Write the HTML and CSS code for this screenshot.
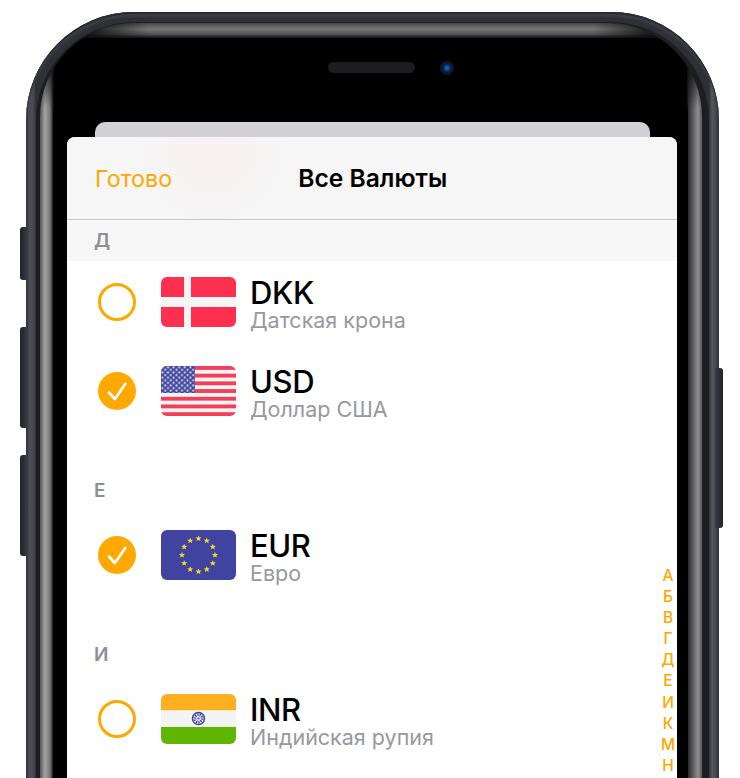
FILE: index.html
```html
<!DOCTYPE html>
<html lang="ru">
<head>
    <meta charset="UTF-8">
    <meta name="viewport" content="width=device-width, initial-scale=1.0">
    <title>Все Валюты</title>
    <link rel="stylesheet" href="styles.css">
</head>
<body>

    <div class="device">
        <div class="side-btn btn-mute"></div>
        <div class="side-btn btn-up"></div>
        <div class="side-btn btn-down"></div>
        <div class="side-btn btn-power"></div>

        <div class="band">
            <div class="bezel">
                <div class="screen">
                    <div class="notch">
                        <div class="speaker"></div>
                        <div class="camera"></div>
                    </div>

                    <div class="sheet-back"></div>
                    <div class="sheet">
                        <div class="navbar">
                            <a class="done" href="#">Готово</a>
                            <h1>Все Валюты</h1>
                        </div>

                        <div class="section-title first">Д</div>
                        <div class="rows">
                            <div class="row">
                                <span class="radio"></span>
                                <svg class="flag" viewBox="0 0 75 50">
                                    <rect width="75" height="50" fill="#ff304f"/>
                                    <rect x="23" width="7" height="50" fill="#f5f5f5"/>
                                    <rect y="20" width="75" height="10" fill="#f5f5f5"/>
                                </svg>
                                <div class="currency">
                                    <div class="code">DKK</div>
                                    <div class="name">Датская крона</div>
                                </div>
                            </div>
                            <div class="row">
                                <span class="radio checked">
                                    <svg viewBox="0 0 38 38"><path d="M11 20.5L16.8 27 27.3 12" fill="none" stroke="#fff" stroke-width="2.7" stroke-linecap="round" stroke-linejoin="round"/></svg>
                                </span>
                                <svg class="flag" viewBox="0 0 75 50">
                                    <defs>
                                        <pattern id="usStars" width="5.6" height="5.2" patternUnits="userSpaceOnUse">
                                            <circle cx="1.4" cy="1.3" r="1" fill="#eeeef8"/>
                                            <circle cx="4.2" cy="3.9" r="1" fill="#eeeef8"/>
                                        </pattern>
                                    </defs>
                                    <rect width="75" height="50" fill="#f5f5f5"/>
                                    <rect y="0" width="75" height="3.85" fill="#f33f57"/>
                                    <rect y="7.7" width="75" height="3.85" fill="#f33f57"/>
                                    <rect y="15.4" width="75" height="3.85" fill="#f33f57"/>
                                    <rect y="23.1" width="75" height="3.85" fill="#f33f57"/>
                                    <rect y="30.8" width="75" height="3.85" fill="#f33f57"/>
                                    <rect y="38.5" width="75" height="3.85" fill="#f33f57"/>
                                    <rect y="46.2" width="75" height="3.8" fill="#f33f57"/>
                                    <rect width="34" height="27" fill="#434aa0"/>
                                    <rect width="34" height="27" fill="url(#usStars)"/>
                                </svg>
                                <div class="currency">
                                    <div class="code">USD</div>
                                    <div class="name">Доллар США</div>
                                </div>
                            </div>
                        </div>

                        <div class="section-title">Е</div>
                        <div class="rows">
                            <div class="row">
                                <span class="radio checked">
                                    <svg viewBox="0 0 38 38"><path d="M11 20.5L16.8 27 27.3 12" fill="none" stroke="#fff" stroke-width="2.7" stroke-linecap="round" stroke-linejoin="round"/></svg>
                                </span>
                                <svg class="flag" viewBox="0 0 75 50">
                                    <defs>
                                        <polygon id="euStar" points="0,-3 0.9,-1 3,-0.9 1.4,0.5 1.9,2.6 0,1.4 -1.9,2.6 -1.4,0.5 -3,-0.9 -0.9,-1" fill="#f7d72a"/>
                                    </defs>
                                    <rect width="75" height="50" fill="#4044a0"/>
                                    <use href="#euStar" x="37.5" y="8.5"/>
                                    <use href="#euStar" x="45.8" y="10.7"/>
                                    <use href="#euStar" x="51.8" y="16.8"/>
                                    <use href="#euStar" x="54" y="25"/>
                                    <use href="#euStar" x="51.8" y="33.2"/>
                                    <use href="#euStar" x="45.8" y="39.3"/>
                                    <use href="#euStar" x="37.5" y="41.5"/>
                                    <use href="#euStar" x="29.2" y="39.3"/>
                                    <use href="#euStar" x="23.2" y="33.2"/>
                                    <use href="#euStar" x="21" y="25"/>
                                    <use href="#euStar" x="23.2" y="16.8"/>
                                    <use href="#euStar" x="29.2" y="10.7"/>
                                </svg>
                                <div class="currency">
                                    <div class="code">EUR</div>
                                    <div class="name">Евро</div>
                                </div>
                            </div>
                        </div>

                        <div class="section-title">И</div>
                        <div class="rows">
                            <div class="row">
                                <span class="radio"></span>
                                <svg class="flag" viewBox="0 0 75 50">
                                    <rect width="75" height="16.5" fill="#ffb020"/>
                                    <rect y="16.5" width="75" height="16.5" fill="#f4f4f4"/>
                                    <rect y="33" width="75" height="17" fill="#5fb500"/>
                                    <circle cx="37.5" cy="24.5" r="6" fill="none" stroke="#3f3f9f" stroke-width="1.5"/>
                                    <circle cx="37.5" cy="24.5" r="3.6" fill="none" stroke="#3f3f9f" stroke-width="2.6" stroke-dasharray="1.2 1"/>
                                    <circle cx="37.5" cy="24.5" r="1.1" fill="#3f3f9f"/>
                                </svg>
                                <div class="currency">
                                    <div class="code">INR</div>
                                    <div class="name">Индийская рупия</div>
                                </div>
                            </div>
                        </div>

                        <div class="index">
                            <span>А</span>
                            <span>Б</span>
                            <span>В</span>
                            <span>Г</span>
                            <span>Д</span>
                            <span>Е</span>
                            <span>И</span>
                            <span>К</span>
                            <span>М</span>
                            <span>Н</span>
                        </div>
                    </div>
                </div>
            </div>
        </div>
    </div>

</body>
</html>
```

FILE: styles.css
```css
* {
    box-sizing: border-box;
}
html, body {
    height: 778px;
    overflow: hidden;
}
body {
    font-family: Inter, "Noto Sans", sans-serif;
    margin: 0;
    padding: 12px 0 0 26px;
    background-color: white;
}

/* phone body */
.device {
    position: relative;
    width: 693px;
    height: 900px;
    padding: 10px;
    border-radius: 108px;
    background: linear-gradient(90deg, #2b2c32 0, #4a4b55 3px, #4a4b55 7px, #2f3036 10px, #2f3036 calc(100% - 10px), #55565f calc(100% - 7px), #46474f calc(100% - 3px), #2b2c32 100%);
    box-shadow: inset 0 2px 0 #2b2c32, inset 0 5px 2px #3c3d45;
}
.side-btn {
    position: absolute;
    left: -6px;
    width: 8px;
    background: linear-gradient(90deg, #22232a, #3a3b43);
    border-radius: 3px 0 0 3px;
}
.btn-mute {
    top: 215px;
    height: 53px;
}
.btn-up {
    top: 315px;
    height: 101px;
}
.btn-down {
    top: 443px;
    height: 101px;
}
.btn-power {
    left: auto;
    right: -4px;
    top: 356px;
    height: 160px;
    background: linear-gradient(90deg, #3a3b43, #22232a);
    border-radius: 0 3px 3px 0;
}
.band {
    padding: 1px 7px 0 4px;
    height: 100%;
    border-radius: 98px;
    background-color: #1e1e22;
}
.bezel {
    height: 100%;
    padding: 15px 14px 0 13px;
    border-radius: 94px;
    background:
        linear-gradient(90deg, #0c0c0e 40px, rgba(12, 12, 14, 0) 110px, rgba(12, 12, 14, 0) calc(100% - 110px), #0c0c0e calc(100% - 40px)) top / 100% 15px no-repeat,
        linear-gradient(180deg, #48484c 0, #77777a 6px, #56565a 11px, #0e0e10 15px) top / 100% 15px no-repeat,
        linear-gradient(180deg, #0c0c0e 35px, rgba(12, 12, 14, 0) 85px) left / 14px 100% no-repeat,
        linear-gradient(180deg, #0c0c0e 35px, rgba(12, 12, 14, 0) 85px) right / 15px 100% no-repeat,
        linear-gradient(90deg, #55565a 0, #a4a4a6 5px, #77777a 10px, #1a1a1c 13px, #000 14px, #000 calc(100% - 15px), #2a2a2c calc(100% - 14px), #8f8f92 calc(100% - 4px), #56565a 100%);
}
.screen {
    height: 100%;
    padding: 24px 11px 0 14px;
    border-radius: 78px 78px 0 0;
    background-color: black;
}

/* speaker and camera */
.notch {
    display: flex;
    align-items: center;
    gap: 25px;
    height: 11px;
    margin-bottom: 49px;
    padding-left: 261px;
}
.speaker {
    width: 87px;
    height: 11px;
    border-radius: 6px;
    background-color: #1d1d1f;
}
.camera {
    flex: none;
    width: 14px;
    height: 14px;
    border-radius: 50%;
    background: radial-gradient(circle, #1f6fd0 0, #0b3f86 25%, #0a1a30 45%, #11151c 100%);
}

/* cards */
.sheet-back {
    height: 15px;
    margin: 0 27px 0 28px;
    background-color: #d1d1d6;
    border-radius: 10px 10px 0 0;
}
.sheet {
    position: relative;
    height: 660px;
    background-color: white;
    border-radius: 8px 8px 0 0;
    overflow: hidden;
}
.navbar {
    display: flex;
    align-items: center;
    height: 83px;
    padding-left: 28px;
    border-bottom: 1px solid #c6c6c8;
    background:
        radial-gradient(circle at 145px 10px, rgba(255, 228, 228, 0.3) 0, rgba(255, 228, 228, 0) 75px),
        #f6f6f6;
}
.done {
    color: #ffa800;
    text-decoration: none;
    font-size: 23.3px;
}
.navbar h1 {
    margin: 0 0 0 126px;
    font-size: 24.6px;
    font-weight: 600;
    color: black;
}
.section-title {
    height: 41px;
    margin-top: 41px;
    padding-left: 27px;
    font-size: 19px;
    line-height: 35px;
    font-weight: 600;
    color: #8e8e93;
}
.section-title.first {
    margin-top: 0;
    line-height: 42px;
    background-color: #f7f7f7;
}
.rows {
    display: flex;
    flex-direction: column;
    gap: 7px;
}
.row {
    display: flex;
    align-items: center;
    height: 82px;
    padding-left: 31px;
}
.radio {
    flex: none;
    width: 38px;
    height: 38px;
    border: 3.5px solid #ffa800;
    border-radius: 50%;
}
.radio.checked {
    border: none;
    background-color: #ffa800;
}
.radio svg {
    display: block;
}
.flag {
    flex: none;
    width: 75px;
    height: 50px;
    margin-left: 25px;
    border-radius: 6px;
}
.currency {
    margin-left: 14px;
    padding-top: 4px;
}
.code {
    font-size: 31px;
    line-height: 31px;
    font-weight: 500;
    letter-spacing: -0.4px;
    color: black;
}
.name {
    font-size: 21.5px;
    line-height: 24px;
    color: #98989d;
}

/* alphabet on the right */
.index {
    position: absolute;
    top: 428px;
    right: -1px;
    width: 20px;
    display: flex;
    flex-direction: column;
    align-items: center;
    font-size: 15.5px;
    line-height: 21.1px;
    font-weight: 500;
    color: #ffa800;
}
```
